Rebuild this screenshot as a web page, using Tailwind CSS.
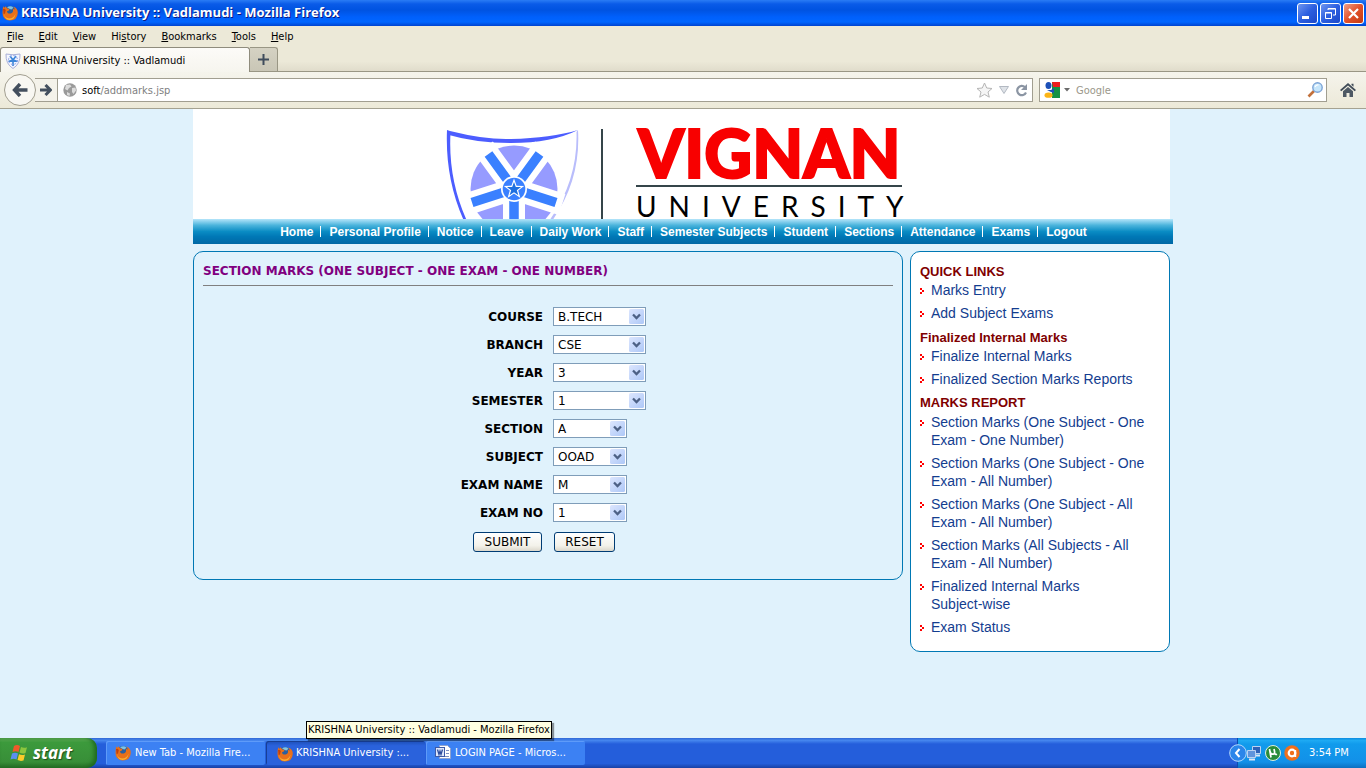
<!DOCTYPE html>
<html lang="en">
<head>
<meta charset="utf-8">
<title>KRISHNA University :: Vadlamudi</title>
<script src="https://cdn.jsdelivr.net/npm/@tailwindcss/browser@4"></script>
</head>
<body class="flex h-screen flex-col overflow-hidden bg-[#e0f2fc] font-['DejaVu_Sans_Condensed','DejaVu_Sans',sans-serif] text-[11px] text-black">

<svg class="absolute size-0" aria-hidden="true">
  <defs><linearGradient id="dg" x1="0" y1="0" x2="1" y2="1"><stop offset="0" stop-color="#dce6fe"/><stop offset="1" stop-color="#aec8f7"/></linearGradient></defs>
  <symbol id="firefox" viewBox="0 0 16 16">
    <circle cx="8" cy="7.500" r="6.500" fill="#2b5f9e"/>
    <path d="M5 2.200q4-2 6.500.5l-2 1.800-2-.6z" fill="#7cc3e6"/>
    <path d="M.8 3l1-1.800.6 1.800 1.200-1.800 1.600 2.400 2.400.2-.8 1.600-1.800.8.6 1.800q2 1.200 4.200 0 2-1.400.8-4.600l2 1.400q.2-2-1.400-3.400 4.800 1.600 4.600 6.600-.6 7.600-8 7.600Q.6 15 .5 8z" fill="#e8701a"/>
    <path d="M2 9q1 4 5 4.500 5 0 6.500-5-.4 6.200-6 6.400Q2.500 14.500 2 9z" fill="#f9b233"/>
    <path d="M1 4l1.500-.2L3.800 5 3 8.500 1.600 9z" fill="#c2410c"/>
  </symbol>
  <symbol id="chev" viewBox="0 0 4 6">
    <path d="M0 0h2v2H0zM2 2h2v2H2zM0 4h2v2H0z" fill="#f00" shape-rendering="crispEdges"/>
  </symbol>
  <symbol id="drop" viewBox="0 0 15 15">
    <rect width="15" height="15" rx="1.500" fill="url(#dg)"/>
    <path d="M4 5.500l3.500 3.500L11 5.500" fill="none" stroke="#4d6185" stroke-width="2.300"/>
  </symbol>
</svg>

<header class="flex h-[26px] shrink-0 items-center bg-[linear-gradient(#2a7cf5_0px,#0a5be8_4px,#0053e1_10px,#0060fc_17px,#0066ff_22px,#0043cf_26px)] px-[2px]">
  <svg class="size-4"><use href="#firefox"/></svg>
  <h1 class="ml-[3px] flex-1 font-['Open_Sans',sans-serif] text-[13px] font-bold text-white [text-shadow:1px_1px_#0a1883]">KRISHNA University :: Vadlamudi - Mozilla Firefox</h1>
  <div class="flex gap-[2px]">
    <button aria-label="Minimize" class="size-[21px] rounded-[3px] border border-white bg-[linear-gradient(135deg,#6f96f0,#2c5fe0_50%,#1c48c8)]"><svg viewBox="0 0 19 19" class="size-[19px]"><path d="M4 12h7v3H4z" fill="#fff"/></svg></button>
    <button aria-label="Restore" class="size-[21px] rounded-[3px] border border-white bg-[linear-gradient(135deg,#6f96f0,#2c5fe0_50%,#1c48c8)]"><svg viewBox="0 0 19 19" class="size-[19px]" fill="none" stroke="#fff"><path d="M7 6V4.500h7.500V11H12M7 5h7.500M4.500 8.500h6v6h-6zM4 9h7"/></svg></button>
    <button aria-label="Close" class="size-[21px] rounded-[3px] border border-white bg-[linear-gradient(135deg,#f0a088,#e2512a_50%,#c33a10)]"><svg viewBox="0 0 19 19" class="size-[19px]"><path d="M5 5l9 9M14 5l-9 9" stroke="#fff" stroke-width="2.200"/></svg></button>
  </div>
</header>

<nav aria-label="Menu bar" class="flex h-[21px] shrink-0 items-center gap-[15px] bg-[#ece9d8] px-[7px] pt-[2px]">
  <button><u>F</u>ile</button><button><u>E</u>dit</button><button><u>V</u>iew</button><button>Hi<u>s</u>tory</button><button><u>B</u>ookmarks</button><button><u>T</u>ools</button><button><u>H</u>elp</button>
</nav>

<div class="flex h-[25px] shrink-0 items-end border-b border-[#999684] bg-[linear-gradient(#ece9d8_60%,#e0dccb)]">
  <button class="-mb-px flex h-[25px] w-[250px] items-center gap-[2px] rounded-t-[3px] border border-b-0 border-[#8f8c7d] bg-[linear-gradient(#fcfbf8,#f6f5ee)] pt-[2px] pl-1">
    <svg viewBox="0 0 16 16" class="size-4"><path d="M1 1q7 1.500 14 0 .5 10-7 14.500Q.5 11 1 1z" fill="#f4f6ff" stroke="#a9b0d8"/><path d="M8 7v6M8 7L3.500 8.500M8 7l4.500 1.500M8 7L5 3M8 7l3-4" stroke="#3b86d8" stroke-width="1.600"/><circle cx="8" cy="7" r="4.500" fill="none" stroke="#8fa4e8" stroke-dasharray="2 1.500"/></svg>
    <span>KRISHNA University :: Vadlamudi</span>
  </button>
  <button aria-label="New tab" class="flex h-6 w-7 items-center justify-center rounded-tr-[3px] border border-b-0 border-l-0 border-[#999684] bg-[linear-gradient(#d5d2c3,#c9c6b6)]"><svg viewBox="0 0 11 11" class="size-[11px]"><path d="M5.500 0v11M0 5.500h11" stroke="#3f4c5c" stroke-width="2"/></svg></button>
</div>

<div class="flex h-[37px] shrink-0 items-center border-b border-[#a5a291] bg-[linear-gradient(#f5f4ec,#ece9d8)] pr-[10px] pl-1">
  <button aria-label="Back" class="z-10 flex size-8 items-center justify-center rounded-full border border-[#a19e90] bg-[#f8f7f2]"><svg viewBox="0 0 16 14" class="h-[14px] w-4"><path d="M8 1L2.500 7 8 13M3 7h12.500" fill="none" stroke="#434f5e" stroke-width="3.400"/></svg></button>
  <button aria-label="Forward" class="-ml-px flex h-6 w-[22px] items-center justify-center border-y border-[#a19e90] bg-[#f4f2ea]"><svg viewBox="0 0 12 12" class="size-3"><path d="M5.500 1l5 5-5 5M10 6H0" fill="none" stroke="#434f5e" stroke-width="3"/></svg></button>
  <div class="flex h-6 flex-1 items-center border border-[#a19e90] bg-white pr-1 pl-[5px]">
    <svg viewBox="0 0 14 14" class="size-[14px]"><circle cx="7" cy="7" r="6.700" fill="#9a9a9a"/><path d="M3 2l4-.5 1.500 2L6 5 4.500 7.500 2 6zM9 5l3.500-.5.5 3-2.500 3.500L9 9zM4 9l3 1.500L6.500 13 4 12z" fill="#dcdcdc"/></svg>
    <p class="ml-[5px] flex-1 pt-[2px] text-[#808080]"><span class="text-black">soft</span>/addmarks.jsp</p>
    <button aria-label="Bookmark"><svg viewBox="0 0 17 16" class="h-4 w-[17px]"><path d="M8.500 1l2.200 5 5.300.5-4 3.500 1.300 5.200-4.800-2.800-4.800 2.800L5 10 1 6.500 6.300 6z" fill="#f5f5f5" stroke="#b5b5b5"/></svg></button>
    <button aria-label="History" class="ml-[6px]"><svg viewBox="0 0 10 8" class="h-2 w-[10px]"><path d="M.5.500h9L5 7.500z" fill="#dfe3e8" stroke="#b3b9c2"/></svg></button>
    <button aria-label="Reload" class="ml-[6px]"><svg viewBox="0 0 13 13" class="size-[13px]"><path d="M10 3.200A4.600 4.600 0 1 0 11 8.500" fill="none" stroke="#8b95a3" stroke-width="2.200"/><path d="M12 0v6H6z" fill="#8b95a3"/></svg></button>
  </div>
  <div class="ml-[6px] flex h-6 w-[288px] items-center border border-[#a19e90] bg-white pr-[3px] pl-1">
    <svg viewBox="0 0 16 16" class="size-4"><path d="M8 0h8v16H8z" fill="#149244"/><path d="M8 0h8v5H9z" fill="#ee1c1c"/><path d="M0 0h8v16H0z" fill="#fff"/><ellipse cx="4.500" cy="3.500" rx="3" ry="3.500" fill="#1c50b8"/><path d="M3 8h4l3-2v5L7 10z" fill="#1c50b8"/><ellipse cx="4.500" cy="13.200" rx="4" ry="2.600" fill="#fbb416"/></svg>
    <svg viewBox="0 0 6 4" class="ml-1 h-1 w-[6px]"><path d="M0 0h6L3 3.500z" fill="#6b6b6b"/></svg>
    <input aria-label="Search" placeholder="Google" class="ml-[6px] min-w-0 flex-1 pt-[2px] outline-none placeholder:text-[#9a978a]">
    <button aria-label="Go"><svg viewBox="0 0 16 16" class="size-4"><path d="M7 9l-5.500 5.500" stroke="#c2703a" stroke-width="2.600"/><circle cx="10.500" cy="5.500" r="4.700" fill="#c6e6fb" stroke="#7ba3d6" stroke-width="1.400"/><path d="M8 5q1-2.500 3.500-2" stroke="#fff" fill="none" stroke-width="1.300"/></svg></button>
  </div>
  <button aria-label="Home" class="ml-[13px]"><svg viewBox="0 0 16 14" class="h-[14px] w-4"><path d="M8 0l8 7-1.300 1.300L8 2.600 1.300 8.300 0 7zM11.500.8h2v3l-2-1.700z" fill="#414c58"/><path d="M8 4l5 4.300V14H9.500v-4h-3v4H3V8.300z" fill="#4e5964"/></svg></button>
</div>

<main class="min-h-0 w-full flex-1 overflow-hidden font-['Liberation_Sans',Arial,sans-serif]">
  <div class="mx-auto max-w-[980px]">
    <div class="mr-[3px] flex h-[110px] items-start bg-white pl-[253px]">
      <svg viewBox="0 0 133 90" class="mt-5 h-[90px] w-[133px] shrink-0" aria-label="Vignan shield">
        <path d="M1 1Q-1 50 18 92h3Q2 50 4.500 4z" fill="#4c5dff"/>
        <path d="M1 1l3 1Q40 11 65 10q40-1 67-9-26 13-67 13Q30 14 3 6z" fill="#4c5dff"/>
        <path d="M132 1q3 50-26 91h-3Q132 52 130.500 3z" fill="#b9bdfb"/>
        <circle cx="68" cy="60" r="43.500" fill="#969bff"/>
        <g stroke="#fff" stroke-width="22"><path d="M68 60v50M68 60L20 75.500M68 60l48 15.500M68 60L38 19M68 60l30-41"/></g>
        <g stroke="#3a80ff" stroke-width="9.500"><path d="M68 60v50M68 60L26 73.500M68 60l42 13.500M68 60L42.500 25M68 60l25.500-35"/></g>
        <circle cx="68" cy="60" r="13" fill="#fff"/><circle cx="68" cy="60" r="11.300" fill="#3a80ff"/>
        <path d="M68 49.500l2.600 7.200 7.600.2-6 4.700 2.200 7.300-6.400-4.300-6.400 4.300 2.200-7.300-6-4.700 7.600-.2z" fill="#fff"/>
        <path d="M68 53l1.800 5 5.200.1-4.200 3.200 1.600 5-4.400-3-4.400 3 1.600-5-4.200-3.200 5.200-.1z" fill="#1d6fe0"/>
      </svg>
      <div class="mt-5 ml-[22px] h-[90px] w-[2px] shrink-0 bg-[#35454a]"></div>
      <div class="mt-[20px] ml-[33px] shrink-0 font-['Lato',sans-serif]">
        <p class="pl-[2px] text-[66px] leading-[48px] font-black text-[#f80000] [-webkit-text-stroke:2px_#f80000]">VIGNAN</p>
        <div class="mt-[8px] w-[266px] border-t-2 border-[#35454a]"></div>
        <p class="mt-[9px] text-[28px] leading-5 tracking-[12px]">UNIVERSITY</p>
      </div>
    </div>
    <nav aria-label="Site" class="flex h-[25px] items-center justify-center bg-[linear-gradient(#b5e5fa,#4bb4dc_25%,#0a8cc4_50%,#0078b6_70%,#0068a5)] text-[12px] font-bold text-white">
      <a href="#" class="pr-[7px] pl-2">Home</a><span class="h-[11px] w-px bg-white"></span>
      <a href="#" class="pr-[7px] pl-2">Personal Profile</a><span class="h-[11px] w-px bg-white"></span>
      <a href="#" class="pr-[7px] pl-2">Notice</a><span class="h-[11px] w-px bg-white"></span>
      <a href="#" class="pr-[7px] pl-2">Leave</a><span class="h-[11px] w-px bg-white"></span>
      <a href="#" class="pr-[7px] pl-2">Daily Work</a><span class="h-[11px] w-px bg-white"></span>
      <a href="#" class="pr-[7px] pl-2">Staff</a><span class="h-[11px] w-px bg-white"></span>
      <a href="#" class="pr-[7px] pl-2">Semester Subjects</a><span class="h-[11px] w-px bg-white"></span>
      <a href="#" class="pr-[7px] pl-2">Student</a><span class="h-[11px] w-px bg-white"></span>
      <a href="#" class="pr-[7px] pl-2">Sections</a><span class="h-[11px] w-px bg-white"></span>
      <a href="#" class="pr-[7px] pl-2">Attendance</a><span class="h-[11px] w-px bg-white"></span>
      <a href="#" class="pr-[7px] pl-2">Exams</a><span class="h-[11px] w-px bg-white"></span>
      <a href="#" class="pr-[7px] pl-2">Logout</a>
    </nav>
    <div class="mt-[7px] mr-[3px] flex items-start gap-[7px]">
      <section class="flex-1 rounded-[10px] border border-[#0078b4] px-[9px] pt-[10px] pb-[27px] font-['DejaVu_Sans',sans-serif] text-[12px]">
        <h2 class="border-b border-[#808080] pb-[5px] leading-[18px] font-bold text-[#800080]">SECTION MARKS (ONE SUBJECT - ONE EXAM - ONE NUMBER)</h2>
        <form class="mt-4 grid grid-cols-[340px_1fr] items-center gap-x-[10px]">
          <label for="course" class="pt-[2px] text-right leading-[26px] font-bold">COURSE</label>
          <div class="relative w-[93px]"><select id="course" class="h-[19px] w-full appearance-none border border-[#7f9db9] bg-white pl-1"><option>B.TECH</option></select><svg class="pointer-events-none absolute top-[2px] right-[2px] size-[15px]"><use href="#drop"/></svg></div>
          <label for="branch" class="pt-[2px] text-right leading-[26px] font-bold">BRANCH</label>
          <div class="relative w-[93px]"><select id="branch" class="h-[19px] w-full appearance-none border border-[#7f9db9] bg-white pl-1"><option>CSE</option></select><svg class="pointer-events-none absolute top-[2px] right-[2px] size-[15px]"><use href="#drop"/></svg></div>
          <label for="year" class="pt-[2px] text-right leading-[26px] font-bold">YEAR</label>
          <div class="relative w-[93px]"><select id="year" class="h-[19px] w-full appearance-none border border-[#7f9db9] bg-white pl-1"><option>3</option></select><svg class="pointer-events-none absolute top-[2px] right-[2px] size-[15px]"><use href="#drop"/></svg></div>
          <label for="semester" class="pt-[2px] text-right leading-[26px] font-bold">SEMESTER</label>
          <div class="relative w-[93px]"><select id="semester" class="h-[19px] w-full appearance-none border border-[#7f9db9] bg-white pl-1"><option>1</option></select><svg class="pointer-events-none absolute top-[2px] right-[2px] size-[15px]"><use href="#drop"/></svg></div>
          <label for="section" class="pt-[2px] text-right leading-[26px] font-bold">SECTION</label>
          <div class="relative w-[74px]"><select id="section" class="h-[19px] w-full appearance-none border border-[#7f9db9] bg-white pl-1"><option>A</option></select><svg class="pointer-events-none absolute top-[2px] right-[2px] size-[15px]"><use href="#drop"/></svg></div>
          <label for="subject" class="pt-[2px] text-right leading-[26px] font-bold">SUBJECT</label>
          <div class="relative w-[74px]"><select id="subject" class="h-[19px] w-full appearance-none border border-[#7f9db9] bg-white pl-1"><option>OOAD</option></select><svg class="pointer-events-none absolute top-[2px] right-[2px] size-[15px]"><use href="#drop"/></svg></div>
          <label for="exam" class="pt-[2px] text-right leading-[26px] font-bold">EXAM NAME</label>
          <div class="relative w-[74px]"><select id="exam" class="h-[19px] w-full appearance-none border border-[#7f9db9] bg-white pl-1"><option>M</option></select><svg class="pointer-events-none absolute top-[2px] right-[2px] size-[15px]"><use href="#drop"/></svg></div>
          <label for="examno" class="pt-[2px] text-right leading-[26px] font-bold">EXAM NO</label>
          <div class="relative w-[74px]"><select id="examno" class="h-[19px] w-full appearance-none border border-[#7f9db9] bg-white pl-1"><option>1</option></select><svg class="pointer-events-none absolute top-[2px] right-[2px] size-[15px]"><use href="#drop"/></svg></div>
          <button type="submit" class="mt-[6px] mr-px h-5 w-[69px] justify-self-end rounded-[3px] border border-[#003c74] bg-[linear-gradient(#fff,#f3f2ea_70%,#dcd8cc)]">SUBMIT</button>
          <button type="reset" class="mt-[6px] ml-px h-5 w-[61px] rounded-[3px] border border-[#003c74] bg-[linear-gradient(#fff,#f3f2ea_70%,#dcd8cc)]">RESET</button>
        </form>
      </section>
      <aside class="w-[260px] rounded-[10px] border border-[#0078b4] bg-white pt-[11px] pr-[18px] pb-[15px] pl-[9px] text-[14px] leading-[18px] text-[#133d8f]">
        <h2 class="text-[13px] leading-[18px] font-bold text-[#800000]">QUICK LINKS</h2>
        <ul class="mb-[7px] flex flex-col gap-[5px]">
          <li class="flex gap-[7px]"><svg class="mt-[7px] h-[6px] w-1 shrink-0"><use href="#chev"/></svg><a href="#">Marks Entry</a></li>
          <li class="flex gap-[7px]"><svg class="mt-[7px] h-[6px] w-1 shrink-0"><use href="#chev"/></svg><a href="#">Add Subject Exams</a></li>
        </ul>
        <h2 class="text-[13px] leading-[18px] font-bold text-[#800000]">Finalized Internal Marks</h2>
        <ul class="mb-[6px] flex flex-col gap-[5px]">
          <li class="flex gap-[7px]"><svg class="mt-[7px] h-[6px] w-1 shrink-0"><use href="#chev"/></svg><a href="#">Finalize Internal Marks</a></li>
          <li class="flex gap-[7px]"><svg class="mt-[7px] h-[6px] w-1 shrink-0"><use href="#chev"/></svg><a href="#">Finalized Section Marks Reports</a></li>
        </ul>
        <h2 class="mb-px text-[13px] leading-[18px] font-bold text-[#800000]">MARKS REPORT</h2>
        <ul class="flex flex-col gap-[5px]">
          <li class="flex gap-[7px]"><svg class="mt-[7px] h-[6px] w-1 shrink-0"><use href="#chev"/></svg><a href="#">Section Marks (One Subject - One<br>Exam - One Number)</a></li>
          <li class="flex gap-[7px]"><svg class="mt-[7px] h-[6px] w-1 shrink-0"><use href="#chev"/></svg><a href="#">Section Marks (One Subject - One<br>Exam - All Number)</a></li>
          <li class="flex gap-[7px]"><svg class="mt-[7px] h-[6px] w-1 shrink-0"><use href="#chev"/></svg><a href="#">Section Marks (One Subject - All<br>Exam - All Number)</a></li>
          <li class="flex gap-[7px]"><svg class="mt-[7px] h-[6px] w-1 shrink-0"><use href="#chev"/></svg><a href="#">Section Marks (All Subjects - All<br>Exam - All Number)</a></li>
          <li class="flex gap-[7px]"><svg class="mt-[7px] h-[6px] w-1 shrink-0"><use href="#chev"/></svg><a href="#">Finalized Internal Marks<br>Subject-wise</a></li>
          <li class="flex gap-[7px]"><svg class="mt-[7px] h-[6px] w-1 shrink-0"><use href="#chev"/></svg><a href="#">Exam Status</a></li>
        </ul>
      </aside>
    </div>
  </div>
</main>

<footer class="flex h-[30px] shrink-0 items-stretch bg-[linear-gradient(#3168d5,#4586ee_8%,#245edb_20%,#245edb_85%,#1941a5)] text-white">
  <button class="flex w-[97px] items-center rounded-r-[10px] bg-[linear-gradient(#5eac56,#3c9a3c_15%,#388e38_80%,#2a722a)] pl-[10px] shadow-[inset_-3px_-1px_4px_#1f6a1f]">
    <svg viewBox="0 0 19 18" class="h-[18px] w-[19px]"><path d="M4 2q3-2 6 0L8.500 8q-3-1.500-6 0z" fill="#f0592a"/><path d="M11 3q3 1.500 6 .2L15.500 9q-3 1.200-6-.4z" fill="#8cc63e"/><path d="M2 9.500q3-1.700 6 0L6.500 15.500q-3-1.700-6 0z" fill="#5b8ff0"/><path d="M9 10.200q3 1.500 6 .2L13.500 16.500q-3 1-6-.4z" fill="#fbcb2a"/></svg>
    <span class="ml-1 font-['Open_Sans',sans-serif] text-[17px] leading-5 font-bold italic [text-shadow:1px_1px_1px_#1d4f1d]">start</span>
  </button>
  <div class="relative ml-[9px] flex flex-1 items-center gap-px">
    <button class="flex h-6 w-[159px] items-center rounded-[2px] bg-[#3c81f3] pl-[9px] shadow-[inset_1px_1px_#5e9bf9]"><svg class="size-4"><use href="#firefox"/></svg><span class="ml-1 whitespace-nowrap">New Tab - Mozilla Fire...</span></button>
    <button class="flex h-6 w-[159px] items-center rounded-[2px] bg-[#1e52b7] bg-[linear-gradient(#1d4fb8,#2a62dc_20%,#2a62dc)] pt-px pl-[11px] shadow-[inset_1px_1px_#173f95]"><svg class="size-4"><use href="#firefox"/></svg><span class="ml-[3px] whitespace-nowrap">KRISHNA University :...</span></button>
    <button class="flex h-6 w-[159px] items-center rounded-[2px] bg-[#3c81f3] pl-[9px] shadow-[inset_1px_1px_#5e9bf9]"><svg viewBox="0 0 16 16" class="size-4"><path d="M4.500.5h8l3 3v10h-11z" fill="#fff" stroke="#8fa3d0"/><path d="M6 11.500h8M11 5.500h3M11 8.500h3" stroke="#7b8fc0"/><rect x=".5" y="2.500" width="9" height="9" fill="#dfe8fb" stroke="#3c5aa8"/><path d="M2.500 4.500L4 9.500l1-3.500 1 3.500 1.500-5" fill="none" stroke="#2a4a9c" stroke-width="1.300"/></svg><span class="ml-1 whitespace-nowrap">LOGIN PAGE - Micros...</span></button>
    <div role="tooltip" class="absolute bottom-[29px] left-[200px] z-20 flex h-[18px] items-center border border-black bg-[#ffffe1] px-[1px] whitespace-nowrap text-black shadow-[2px_2px_1px_#0006]">KRISHNA University :: Vadlamudi - Mozilla Firefox</div>
  </div>
  <div class="relative flex w-[129px] items-center gap-[3px] border-l border-[#0b4bb0] bg-[linear-gradient(#0c8bdf,#1eaaf3_8%,#119bec_20%,#1290e8_80%,#0c6fc0)] pl-2">
    <button aria-label="Show hidden icons" class="absolute top-[6px] -left-[9px]"><svg viewBox="0 0 18 18" class="size-[18px]"><circle cx="9" cy="9" r="8.300" fill="#2b86ea" stroke="#b7dafc"/><path d="M10.500 5L7 9l3.500 4" fill="none" stroke="#fff" stroke-width="2"/></svg></button>
    <svg viewBox="0 0 16 16" class="size-4"><g stroke="#bcd2f2"><path d="M6.500 1.500h8v7h-8z" fill="#2e62b8"/><path d="M1.500 5.500h8v7h-8z" fill="#5f94dc"/></g><path d="M3 14.500h6M10 10.500h4" stroke="#dbe6f7" stroke-width="1.800"/></svg>
    <svg viewBox="0 0 16 16" class="size-4"><circle cx="8" cy="8" r="7.500" fill="#2a8c3a" stroke="#dff0df"/><path d="M4.500 4l1.500 8.500M5 6q.5 3.500 3 3.200 2-.3 1.500-3L9 4M9.500 8q.8 2 2.500 1.200" fill="none" stroke="#fff" stroke-width="1.700"/></svg>
    <svg viewBox="0 0 16 16" class="size-4"><circle cx="8" cy="8" r="7.700" fill="#f0701c"/><circle cx="8" cy="8" r="3.300" fill="none" stroke="#fff" stroke-width="2.200"/><path d="M11.200 5v7" stroke="#fff" stroke-width="2"/></svg>
    <time class="ml-[6px] whitespace-nowrap">3:54 PM</time>
  </div>
</footer>
</body>
</html>
